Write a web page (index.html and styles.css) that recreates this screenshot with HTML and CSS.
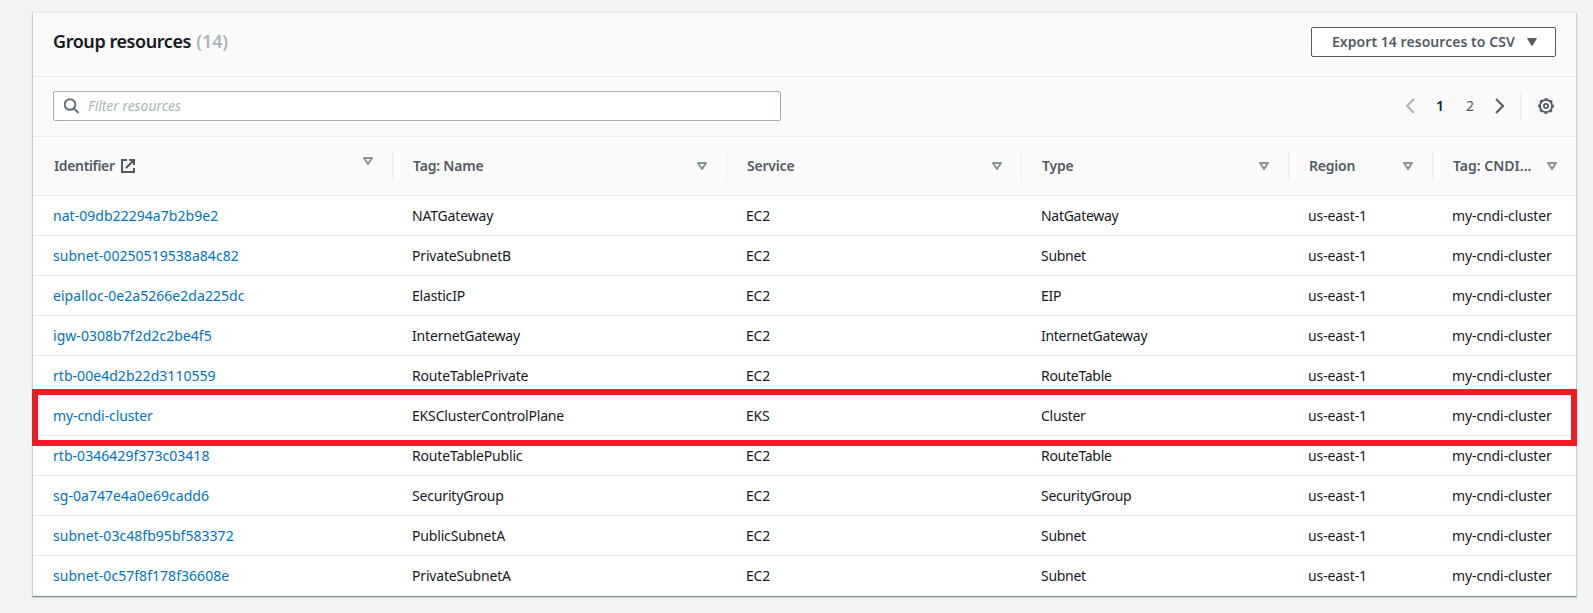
FILE: index.html
```html
<!DOCTYPE html>
<html lang="en">
<head>
<meta charset="utf-8">
<title>Group resources</title>
<link rel="stylesheet" href="styles.css">
</head>
<body>
<svg class="defs" width="0" height="0">
  <symbol id="sort" viewBox="0 0 10 8"><path d="M1 1h8L5 7z" fill="none" stroke="#879596" stroke-width="2" stroke-linejoin="round"/></symbol>
</svg>
<main class="card">
  <header class="card-header">
    <h2 class="title">Group resources <span class="count">(14)</span></h2>
    <button class="export"><span class="export-label">Export 14 resources to CSV</span><svg width="10" height="8" viewBox="0 0 10 8"><path d="M.6.6h8.8L5 7.6z" fill="#545b64" stroke="#545b64" stroke-linejoin="round"/></svg></button>
  </header>
  <div class="toolbar">
    <div class="filter">
      <svg width="16" height="16" viewBox="0 0 16 16" fill="none" stroke="#687078" stroke-width="2"><circle cx="6" cy="6.5" r="5.3"/><path d="M9.8 10.3l4.7 4.7"/></svg>
      <span class="placeholder">Filter resources</span>
    </div>
    <nav class="pages">
      <svg class="prev" width="10" height="16" viewBox="0 0 10 16"><path d="M9 1L2 8l7 7" fill="none" stroke="#aab7b8" stroke-width="2"/></svg>
      <span class="page current">1</span>
      <span class="page">2</span>
      <svg class="next" width="10" height="16" viewBox="0 0 10 16"><path d="M1 1l7 7-7 7" fill="none" stroke="#545b64" stroke-width="2"/></svg>
      <span class="settings"><svg width="16" height="16" viewBox="0 0 16 16" fill="none" stroke="#545b64"><circle cx="8" cy="8" r="6.1" stroke-width="1.9"/><circle cx="8" cy="8" r="7.2" stroke-width="1.5" stroke-dasharray="2.83 2.825" stroke-dashoffset="1.41"/><circle cx="8" cy="8" r="2.1" stroke-width="1.8"/></svg></span>
    </nav>
  </div>
  <table class="grid">
    <colgroup><col class="c-id"><col class="c-name"><col class="c-service"><col class="c-type"><col class="c-region"><col class="c-tag"></colgroup>
    <thead>
      <tr>
        <th><div class="th first"><span class="label">Identifier</span><svg class="ext" width="14" height="14" viewBox="0 0 14 14" fill="none" stroke="#545b64" stroke-width="2"><path d="M6 1H1v12h12V9M5 9l7.5-7.5M8.2 1H13v5"/></svg><svg class="sort" width="10" height="8"><use href="#sort"/></svg></div></th>
        <th><div class="th"><span class="label">Tag: Name</span><svg class="sort" width="10" height="8"><use href="#sort"/></svg></div></th>
        <th><div class="th"><span class="label">Service</span><svg class="sort" width="10" height="8"><use href="#sort"/></svg></div></th>
        <th><div class="th"><span class="label">Type</span><svg class="sort" width="10" height="8"><use href="#sort"/></svg></div></th>
        <th><div class="th"><span class="label">Region</span><svg class="sort" width="10" height="8"><use href="#sort"/></svg></div></th>
        <th><div class="th last"><span class="label">Tag: CNDI...</span><svg class="sort" width="10" height="8"><use href="#sort"/></svg></div></th>
      </tr>
    </thead>
    <tbody>
      <tr><td><a>nat-09db22294a7b2b9e2</a></td><td>NATGateway</td><td>EC2</td><td>NatGateway</td><td>us-east-1</td><td>my-cndi-cluster</td></tr>
      <tr><td><a>subnet-00250519538a84c82</a></td><td>PrivateSubnetB</td><td>EC2</td><td>Subnet</td><td>us-east-1</td><td>my-cndi-cluster</td></tr>
      <tr><td><a>eipalloc-0e2a5266e2da225dc</a></td><td>ElasticIP</td><td>EC2</td><td>EIP</td><td>us-east-1</td><td>my-cndi-cluster</td></tr>
      <tr><td><a>igw-0308b7f2d2c2be4f5</a></td><td>InternetGateway</td><td>EC2</td><td>InternetGateway</td><td>us-east-1</td><td>my-cndi-cluster</td></tr>
      <tr><td><a>rtb-00e4d2b22d3110559</a></td><td>RouteTablePrivate</td><td>EC2</td><td>RouteTable</td><td>us-east-1</td><td>my-cndi-cluster</td></tr>
      <tr class="marked"><td><a>my-cndi-cluster</a></td><td>EKSClusterControlPlane</td><td>EKS</td><td>Cluster</td><td>us-east-1</td><td>my-cndi-cluster</td></tr>
      <tr><td><a>rtb-0346429f373c03418</a></td><td>RouteTablePublic</td><td>EC2</td><td>RouteTable</td><td>us-east-1</td><td>my-cndi-cluster</td></tr>
      <tr><td><a>sg-0a747e4a0e69cadd6</a></td><td>SecurityGroup</td><td>EC2</td><td>SecurityGroup</td><td>us-east-1</td><td>my-cndi-cluster</td></tr>
      <tr><td><a>subnet-03c48fb95bf583372</a></td><td>PublicSubnetA</td><td>EC2</td><td>Subnet</td><td>us-east-1</td><td>my-cndi-cluster</td></tr>
      <tr><td><a>subnet-0c57f8f178f36608e</a></td><td>PrivateSubnetA</td><td>EC2</td><td>Subnet</td><td>us-east-1</td><td>my-cndi-cluster</td></tr>
    </tbody>
  </table>
</main>
</body>
</html>
```
FILE: styles.css
```css
*, *::after { box-sizing: border-box; }
body {
  margin: 0;
  padding: 12px 16px 0 32px;
  height: 613px;
  overflow: hidden;
  background: #f2f3f3;
  color: #16191f;
  font: 14px/20px "Noto Sans", "Open Sans", sans-serif;
}
.defs { display: block; height: 0; }
.card {
  width: 1545px;
  height: 585px;
  background: #fff;
  border: 1px solid #c9d0d0;
  border-top-color: #e6eaea;
  border-bottom-color: #879596;
  box-shadow: 0 1px 1px rgba(0, 28, 36, .15);
}
.card-header {
  display: flex;
  justify-content: space-between;
  align-items: flex-start;
  height: 64px;
  padding: 14px 20px 0;
  background: #fafafa;
  border-bottom: 1px solid #eaeded;
}
.title { margin: 0; font-size: 18px; line-height: 28px; font-weight: 600; letter-spacing: -.43px; }
.count { margin-left: 1px; color: #aab7b8; letter-spacing: -.1px; }
.export {
  display: flex;
  align-items: center;
  justify-content: space-between;
  width: 245px;
  height: 30px;
  padding: 0 18px 0 20px;
  background: #fff;
  border: 1px solid #545b64;
  border-radius: 2px;
  color: #545b64;
  font: 600 14px/20px "Noto Sans", sans-serif;
  letter-spacing: .05px;
}
.toolbar {
  display: flex;
  justify-content: space-between;
  height: 60px;
  padding: 14px 22px 0 20px;
  background: #fafafa;
  border-bottom: 1px solid #eaeded;
}
.filter {
  display: flex;
  align-items: center;
  gap: 8px;
  width: 728px;
  height: 30px;
  padding-left: 10px;
  background: #fff;
  border: 1px solid #a2b2b3;
  border-radius: 2px;
}
.placeholder { color: #aab7b8; font-style: italic; letter-spacing: -.05px; }
.pages { display: flex; align-items: center; height: 30px; color: #545b64; }
.page { width: 30px; text-align: center; }
.current { color: #16191f; font-weight: 600; }
.prev { margin-right: 10px; }
.next { margin-left: 10px; }
.settings { display: flex; align-items: center; height: 30px; margin-left: 15px; padding-left: 17px; border-left: 1px solid #eaeded; }
.grid { width: 1543px; table-layout: fixed; border-collapse: separate; border-spacing: 0; }
.c-id { width: 360px; }
.c-name { width: 334px; }
.c-service { width: 295px; }
.c-type { width: 267px; }
.c-region { width: 144px; }
.c-tag { width: 143px; }
th { height: 59px; padding: 0; background: #fafafa; border-bottom: 1px solid #eaeded; color: #545b64; font-weight: 600; }
.th { display: flex; align-items: center; height: 29px; padding: 0 19px 0 20px; border-right: 1px solid #eaeded; }
.first { padding-left: 21px; }
.last { border-right: 0; }
.sort { margin-left: auto; }
.first .sort { margin-bottom: 10px; }
.ext { margin-left: 6px; }
.label { white-space: nowrap; letter-spacing: -.2px; }
.first .label { letter-spacing: -.35px; }
.last .label { letter-spacing: 0; }
td { height: 40px; padding: 1px 0 0 19px; border-bottom: 1px solid #eaeded; white-space: nowrap; letter-spacing: -.17px; }
td:first-child { padding-left: 20px; letter-spacing: .04px; }
td:nth-child(4) { letter-spacing: -.28px; }
td:nth-child(n+5) { letter-spacing: -.1px; }
.marked td:first-child { letter-spacing: -.1px; }
a { color: #0073bb; }
.marked { position: relative; }
.marked::after {
  content: "";
  position: absolute;
  left: -1px;
  top: -7px;
  width: 1545px;
  height: 57px;
  border: 6px solid #ed1c24;
}
```
